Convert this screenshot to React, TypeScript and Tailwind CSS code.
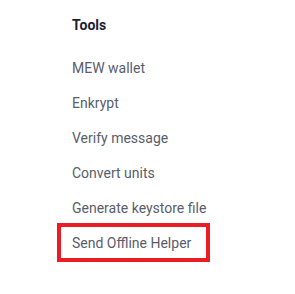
const tools = ['MEW wallet', 'Enkrypt', 'Verify message', 'Convert units', 'Generate keystore file']

export default function App() {
  return (
    <div className="w-[295px] h-[294px] bg-white font-['Roboto',sans-serif]">
      <div className="pl-[57px] pt-[8px]">
        <div className="h-[35px] flex items-center pl-[15px] text-[14px] font-bold text-[#1e2130]">
          Tools
        </div>
        <ul className="mt-[8px]">
          {tools.map(t => (
            <li key={t} className="h-[35px] flex items-center pl-[15px] text-[14px] text-[#5a5d6c]">
              {t}
            </li>
          ))}
          <li className="-mt-[3px] h-[39px] w-[153px] flex items-center pl-[11px] pt-[2px] border-4 border-[#ec1c24] text-[14px] text-[#5a5d6c]">
            Send Offline Helper
          </li>
        </ul>
      </div>
    </div>
  )
}
